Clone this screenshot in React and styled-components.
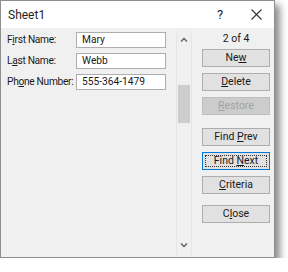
import React from 'react'
import styled, { createGlobalStyle } from 'styled-components'

const Global = createGlobalStyle`
  body {
    margin: 0;
    background: #fff;
    font-family: Roboto, "Liberation Sans", sans-serif;
  }
`

const Dialog = styled.div`
  width: 275px;
  height: 258px;
  box-sizing: border-box;
  border: 1px solid #8f8f8f;
  background: #f0f0f0;
  box-shadow: 5px 5px 7px rgba(0, 0, 0, 0.45);
  display: flex;
  flex-direction: column;
`

const TitleBar = styled.div`
  height: 27px;
  flex: none;
  background: #fff;
  display: flex;
  align-items: center;
  padding-left: 7px;
  font-size: 12px;
  color: #1f1f1f;
`

const Title = styled.span`
  flex: 1;
`

const TitleButton = styled.span`
  width: 36px;
  display: flex;
  justify-content: center;
  color: #222;
  font-size: 13px;
`

const Body = styled.div`
  flex: 1;
  display: flex;
`

const Fields = styled.div`
  width: 175px;
  padding: 4px 0 0 6px;
  box-sizing: border-box;
  display: grid;
  grid-template-columns: 69px 90px;
  grid-auto-rows: 16px;
  row-gap: 5px;
  align-content: start;
  font-size: 10.2px;
  color: #1a1a1a;
`

const Label = styled.label`
  line-height: 16px;
  white-space: nowrap;
  letter-spacing: -0.3px;
`

const Input = styled.div`
  border: 1px solid #aeaeae;
  background: #fff;
  line-height: 14px;
  padding-left: 5px;
  white-space: nowrap;
`

const Key = styled.u`
  text-underline-offset: 1px;
`

const Scroll = styled.div`
  width: 14px;
  margin: 3px 0 2px;
  border-left: 1px solid #e6e6e6;
  border-right: 1px solid #e6e6e6;
  display: flex;
  flex-direction: column;
  align-items: center;
`

const Arrow = styled.svg`
  width: 8px;
  height: 6px;
  margin: ${({ $down }) => ($down ? 'auto 0 7px' : '6px 0 0')};
`

const Thumb = styled.div`
  width: 12px;
  height: 38px;
  margin-top: 42px;
  background: #cdcdcd;
`

const Side = styled.div`
  flex: 1;
  padding: 5px 0 0 10px;
  display: flex;
  flex-direction: column;
  font-size: 10.5px;
  color: #1a1a1a;
`

const Counter = styled.div`
  width: 68px;
  text-align: center;
  height: 16px;
  line-height: 12px;
`

const Button = styled.div`
  width: 68px;
  height: 18px;
  box-sizing: border-box;
  margin-top: ${({ $gap }) => $gap ?? 6}px;
  border: 1px solid ${({ $default, $disabled }) => ($default ? '#0078d7' : $disabled ? '#bfbfbf' : '#adadad')};
  background: ${({ $disabled }) => ($disabled ? '#cccccc' : '#e1e1e1')};
  color: ${({ $disabled }) => ($disabled ? '#a3a3a3' : '#1a1a1a')};
  text-align: center;
  line-height: 16px;
  white-space: nowrap;
  position: relative;
  ${({ $default }) => $default && `
    &::after {
      content: '';
      position: absolute;
      inset: 2px;
      border: 1px dotted #333;
    }
  `}
`

const Chevron = ({ down }) => (
  <Arrow $down={down} viewBox="0 0 8 6">
    <path d={down ? 'M1 1.5 L4 4.5 L7 1.5' : 'M1 4.5 L4 1.5 L7 4.5'} fill="none" stroke="#606060" strokeWidth="1.4" />
  </Arrow>
)

export default () => (
  <>
    <Global />
    <Dialog>
      <TitleBar>
        <Title>Sheet1</Title>
        <TitleButton>?</TitleButton>
        <TitleButton>
          <svg width="11" height="11" viewBox="0 0 11 11">
            <path d="M0.5 0.5 L10.5 10.5 M10.5 0.5 L0.5 10.5" stroke="#333" strokeWidth="1.1" />
          </svg>
        </TitleButton>
      </TitleBar>
      <Body>
        <Fields>
          <Label>F<Key>i</Key>rst Name:</Label>
          <Input>Mary</Input>
          <Label>L<Key>a</Key>st Name:</Label>
          <Input>Webb</Input>
          <Label>Ph<Key>o</Key>ne Number:</Label>
          <Input>555-364-1479</Input>
        </Fields>
        <Scroll>
          <Chevron />
          <Thumb />
          <Chevron down />
        </Scroll>
        <Side>
          <Counter>2 of 4</Counter>
          <Button $gap={0}>Ne<Key>w</Key></Button>
          <Button><Key>D</Key>elete</Button>
          <Button $disabled><Key>R</Key>estore</Button>
          <Button $gap={13}>Find <Key>P</Key>rev</Button>
          <Button $default>Find <Key>N</Key>ext</Button>
          <Button><Key>C</Key>riteria</Button>
          <Button $gap={11}>C<Key>l</Key>ose</Button>
        </Side>
      </Body>
    </Dialog>
  </>
)
